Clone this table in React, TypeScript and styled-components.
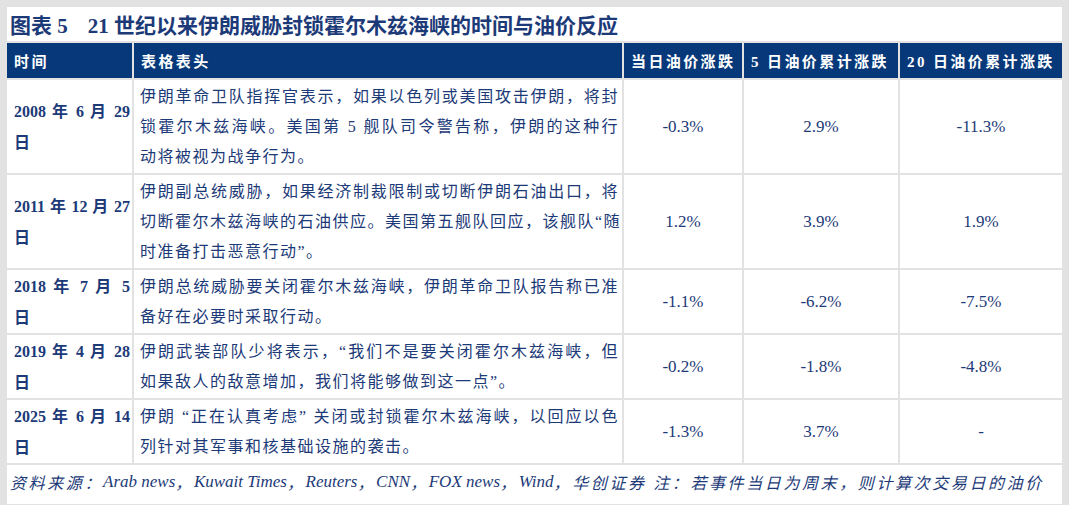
import React from "react";
import styled, { createGlobalStyle } from "styled-components";

const NAVY = "#07397a";
const INK = "#1c3a78";
const LINE = "#e2e2e2";
const FONT = `"Liberation Serif", "Noto Sans CJK SC", serif`;

type Row = {
    date: string;
    desc: string[];
    day: string;
    five: string;
    twenty: string;
};

const rows: Row[] = [
    {
        date: "2008 年 6 月 29",
        desc: [
            "伊朗革命卫队指挥官表示，如果以色列或美国攻击伊朗，将封",
            "锁霍尔木兹海峡。美国第 5 舰队司令警告称，伊朗的这种行",
            "动将被视为战争行为。",
        ],
        day: "-0.3%",
        five: "2.9%",
        twenty: "-11.3%",
    },
    {
        date: "2011 年 12 月 27",
        desc: [
            "伊朗副总统威胁，如果经济制裁限制或切断伊朗石油出口，将",
            "切断霍尔木兹海峡的石油供应。美国第五舰队回应，该舰队“随",
            "时准备打击恶意行动”。",
        ],
        day: "1.2%",
        five: "3.9%",
        twenty: "1.9%",
    },
    {
        date: "2018 年 7 月 5",
        desc: [
            "伊朗总统威胁要关闭霍尔木兹海峡，伊朗革命卫队报告称已准",
            "备好在必要时采取行动。",
        ],
        day: "-1.1%",
        five: "-6.2%",
        twenty: "-7.5%",
    },
    {
        date: "2019 年 4 月 28",
        desc: [
            "伊朗武装部队少将表示，“我们不是要关闭霍尔木兹海峡，但",
            "如果敌人的敌意增加，我们将能够做到这一点”。",
        ],
        day: "-0.2%",
        five: "-1.8%",
        twenty: "-4.8%",
    },
    {
        date: "2025 年 6 月 14",
        desc: [
            "伊朗 “正在认真考虑” 关闭或封锁霍尔木兹海峡，以回应以色",
            "列针对其军事和核基础设施的袭击。",
        ],
        day: "-1.3%",
        five: "3.7%",
        twenty: "-",
    },
];

const sources = ["Arab news", "Kuwait Times", "Reuters", "CNN", "FOX news", "Wind"];

export default function App() {
    return (
        <>
            <GlobalStyle />
            <Page>
                <Table>
                    <TitleCell>
                        <FigureNo>图表 5</FigureNo>21 世纪以来伊朗威胁封锁霍尔木兹海峡的时间与油价反应
                    </TitleCell>

                    <HeadCell>时间</HeadCell>
                    <HeadCell>表格表头</HeadCell>
                    <HeadCell>当日油价涨跌</HeadCell>
                    <HeadCell>5 日油价累计涨跌</HeadCell>
                    <HeadCell>20 日油价累计涨跌</HeadCell>

                    {rows.map((r) => (
                        <React.Fragment key={r.date}>
                            <DateCell>
                                <DateLine>{r.date}</DateLine>
                                <DateLine $last>日</DateLine>
                            </DateCell>
                            <DescCell>
                                {r.desc.map((line, i) => (
                                    <TextLine key={i} $last={i === r.desc.length - 1}>
                                        {line}
                                    </TextLine>
                                ))}
                            </DescCell>
                            <ValueCell>{r.day}</ValueCell>
                            <ValueCell>{r.five}</ValueCell>
                            <ValueCell>{r.twenty}</ValueCell>
                        </React.Fragment>
                    ))}

                    <Footer>
                        资料来源：
                        {sources.map((s) => (
                            <React.Fragment key={s}>
                                <Latin>{s}</Latin>，
                            </React.Fragment>
                        ))}
                        华创证券 注：若事件当日为周末，则计算次交易日的油价
                    </Footer>
                </Table>
            </Page>
        </>
    );
}

const GlobalStyle = createGlobalStyle`
    html, body {
        margin: 0;
        padding: 0;
        background: ${LINE};
    }
    body {
        font-family: ${FONT};
        color: ${INK};
    }
`;

const Page = styled.div`
    width: 1069px;
    height: 505px;
    box-sizing: border-box;
    padding: 7px 7px 0 7px;
    overflow: hidden;
`;

const Table = styled.div`
    display: grid;
    grid-template-columns: 125px 488px 118px 154px 162px;
    grid-auto-rows: auto;
    gap: 2px;
    background: ${LINE};
`;

const TitleCell = styled.div`
    grid-column: 1 / -1;
    height: 34px;
    background: #fff;
    display: flex;
    align-items: center;
    padding-left: 3px;
    font-size: 21px;
    font-weight: 700;
    color: ${INK};
    white-space: nowrap;
`;

const FigureNo = styled.span`
    margin-right: 20px;
`;

const HeadCell = styled.div`
    height: 35px;
    background: ${NAVY};
    color: #fff;
    display: flex;
    align-items: center;
    padding-left: 7px;
    font-size: 15px;
    font-weight: 700;
    letter-spacing: 2.4px;
    white-space: nowrap;
`;

const DateCell = styled.div`
    background: #fff;
    display: flex;
    flex-direction: column;
    justify-content: center;
    padding: 0 2px 0 7px;
    font-size: 16px;
    font-weight: 700;
`;

const DateLine = styled.div<{ $last?: boolean }>`
    line-height: 31px;
    text-align: justify;
    text-align-last: ${(p) => (p.$last ? "left" : "justify")};
    white-space: nowrap;
`;

const DescCell = styled.div`
    background: #fff;
    padding: 1.5px 3px 1.5px 6px;
    font-size: 16px;
    display: flex;
    flex-direction: column;
    justify-content: center;
`;

const TextLine = styled.div<{ $last?: boolean }>`
    line-height: 30px;
    letter-spacing: 1.5px;
    text-align: justify;
    text-align-last: ${(p) => (p.$last ? "left" : "justify")};
    white-space: nowrap;
`;

const ValueCell = styled.div`
    background: #fff;
    display: flex;
    align-items: center;
    justify-content: center;
    font-size: 17px;
`;

const Footer = styled.div`
    grid-column: 1 / -1;
    height: 39px;
    box-sizing: border-box;
    background: #fff;
    padding: 0 3px 5px 3px;
    display: flex;
    align-items: center;
    font-size: 16px;
    font-style: italic;
    letter-spacing: 2.6px;
    white-space: nowrap;
`;

const Latin = styled.span`
    font-size: 17px;
    letter-spacing: 0;
`;
